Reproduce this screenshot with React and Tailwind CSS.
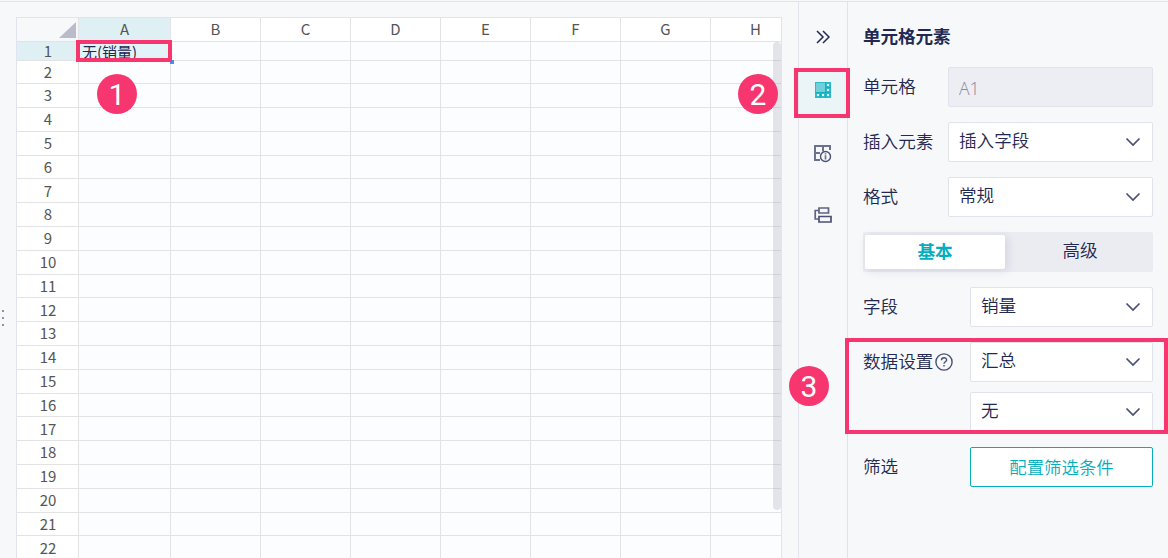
import React from "react";

const COLUMNS = ["A", "B", "C", "D", "E", "F", "G", "H"];
const ROWS = Array.from({ length: 22 }, (_, i) => i + 1);

const Chevron = () => (
  <svg width="16" height="10" viewBox="0 0 16 10" fill="none" className="shrink-0">
    <path d="M1.500 1.500 8 8l6.500-6.500" stroke="#4a4f75" strokeWidth="1.7" />
  </svg>
);

const SelectBox = ({ value, className }) => (
  <div
    className={`flex h-10 items-center justify-between rounded-[2px] border border-[#e1e3ec] bg-white pr-[11px] pl-2.5 ${className}`}
  >
    <span className="-mt-1">{value}</span>
    <Chevron />
  </div>
);

const FormRow = ({ label, children }) => (
  <div className="flex h-10 items-center justify-between">
    <span className="-mt-0.5 flex items-center whitespace-nowrap">{label}</span>
    {children}
  </div>
);

const Sheet = () => (
  <div className="relative mt-[15px] ml-4 h-[542px] w-[766px] shrink-0 overflow-hidden border-x border-t border-[#e1e4ee] bg-[#fcfdff] text-[15px] text-[#555]">
    <div className="flex h-6 border-b border-[#e3e3e5] bg-white">
      <div className="flex w-[62px] shrink-0 items-end justify-end border-r border-[#e3e3e5] bg-[#f7f8fa] pr-[2px] pb-[3px]">
        <svg width="17" height="16" viewBox="0 0 17 16">
          <path d="M17 0v16H0z" fill="#babcca" />
        </svg>
      </div>
      {COLUMNS.map((c) => (
        <div
          key={c}
          className={`flex shrink-0 items-center justify-center border-r border-[#e3e3e5] ${
            c === "A" ? "w-[92px] bg-[#def0f4]" : "w-[90px]"
          }`}
        >
          {c}
        </div>
      ))}
    </div>
    {ROWS.map((r) => (
      <div
        key={r}
        className={`flex border-b border-[#e3e3e5] ${r === 1 ? "h-[18.500px]" : "h-[23.800px]"}`}
      >
        <div
          className={`flex w-[62px] shrink-0 items-center justify-center border-r border-[#e3e3e5] pl-px ${
            r === 1 ? "bg-[#def0f4]" : "bg-white"
          }`}
        >
          {r}
        </div>
        {COLUMNS.map((c) => (
          <div
            key={c}
            className={`shrink-0 overflow-hidden border-r border-[#e3e3e5] ${c === "A" ? "w-[92px]" : "w-[90px]"} ${
              c === "A" && r === 1 ? "bg-[#e2f4f8] pl-[3px] text-[15px] leading-[20px] text-[#232850]" : ""
            }`}
          >
            {c === "A" && r === 1 ? "无(销量)" : ""}
          </div>
        ))}
      </div>
    ))}
    <div className="absolute top-[24px] right-0 h-[468px] w-2 rounded-full bg-[#9699a8]/25" />
    <div className="absolute top-[42px] left-[153px] h-1 w-1 bg-[#4d8bf0]" />
  </div>
);

const Toolbar = () => (
  <div className="ml-4 flex w-[50px] shrink-0 flex-col items-center border-x border-[#e1e3ec]">
    <div className="flex h-[68px] items-center">
      <svg width="14" height="14" viewBox="0 0 14 14" fill="none" className="mt-px">
        <path d="m1 1 6 6-6 6M7 1l6 6-6 6" stroke="#232850" strokeWidth="1.5" />
      </svg>
    </div>
    <div className="flex h-11 w-full items-center justify-center bg-[#ebf5f7]">
      <svg width="16" height="16" viewBox="0 0 16 16" className="-mt-[4px]">
        <path d="M0 0h16v16H0z" fill="#2dbbc9" />
        <path d="M1 1h9v9H1z" fill="#70cfda" />
        <path
          d="M10.500 0v10.500H16M10.500 5.500H16M0 10.500h10.500V16M5.500 10.500V16"
          stroke="#16adbe"
          fill="none"
        />
        <path d="M12 2h2v2h-2zM12 7h2v2h-2zM2 12h2v2H2zM7 12h2v2H7zM12 12h2v2h-2z" fill="#dff4f7" />
      </svg>
    </div>
    <svg width="18" height="18" viewBox="0 0 18 18" fill="none" className="mt-[31px]">
      <path
        d="M6 15H1V1h15v4M1 8h5M9 1v5.500"
        stroke="#6d7190"
        strokeWidth="2"
      />
      <circle cx="11.500" cy="11.500" r="5" stroke="#4a4f75" strokeWidth="1.4" />
      <path d="M11.500 10.300v4.200M11.500 8.200v1.300" stroke="#6d7190" strokeWidth="1.7" />
    </svg>
    <svg width="18" height="16" viewBox="0 0 18 16" fill="none" className="mt-[44px]">
      <path d="M5 1h9.500v5H5z" stroke="#5f6384" strokeWidth="1.7" />
      <path d="M5 9.500h12V15H5z" stroke="#4a4f75" strokeWidth="1.7" />
      <path d="M5 3.500H1.200V12H5" stroke="#5f6384" strokeWidth="1.7" />
    </svg>
  </div>
);

const HelpIcon = () => (
  <svg width="18" height="18" viewBox="0 0 18 18" fill="none" className="mt-px ml-0.5">
    <circle cx="9" cy="9" r="8.100" stroke="#4a4f75" strokeWidth="1.4" />
    <path
      d="M6.500 7.200c0-3.300 5.100-3.200 5.100-.2 0 1.700-2.600 1.800-2.600 3.700M9 11.900v1.700"
      stroke="#4a4f75"
      strokeWidth="1.4"
    />
  </svg>
);

const Panel = () => (
  <div className="flex grow flex-col gap-[15px] pr-[15px] pl-[15px] text-[17.600px] leading-6 font-[350] text-[#232850]">
    <h2 className="mt-[22px] -mb-px h-[29px] font-bold tracking-[-0.1px]">单元格元素</h2>
    <FormRow label="单元格">
      <div className="flex h-10 w-[205px] items-center rounded-[2px] border border-[#e1e3ec] bg-[#edeef3] pt-0.5 pl-2.5 font-['Open_Sans','Noto_Sans',sans-serif] font-[350] text-[#8488a0]">
        A1
      </div>
    </FormRow>
    <FormRow label="插入元素">
      <SelectBox value="插入字段" className="w-[205px]" />
    </FormRow>
    <FormRow label="格式">
      <SelectBox value="常规" className="w-[205px]" />
    </FormRow>
    <div className="flex h-10 rounded-[2px] bg-[#ebecf2] p-0.5 text-center leading-[32px]">
      <div className="my-px w-[140px] rounded-[2px] bg-white font-bold text-[#06aebd] shadow-[2px_2px_10px_rgba(35,40,80,0.13)]">
        基本
      </div>
      <div className="flex-1 pl-1">高级</div>
    </div>
    <FormRow label="字段">
      <SelectBox value="销量" className="w-[183px]" />
    </FormRow>
    <div className="flex flex-col gap-2.5">
      <FormRow
        label={
          <>
            数据设置
            <HelpIcon />
          </>
        }
      >
        <SelectBox value="汇总" className="w-[183px]" />
      </FormRow>
      <SelectBox value="无" className="w-[183px] self-end" />
    </div>
    <FormRow label="筛选">
      <div className="flex h-10 w-[183px] items-center justify-center rounded-[2px] border border-[#06aebd] bg-white text-[17.400px] text-[#06aebd]">
        配置筛选条件
      </div>
    </FormRow>
  </div>
);

// Numbered callout laid over the UI
const Marker = ({ n, className }) => (
  <div
    className={`absolute flex h-10 w-10 items-center justify-center rounded-full bg-[#f73670] pt-0.5 font-['Roboto',sans-serif] text-[30px] leading-none text-white ${className}`}
  >
    {n}
  </div>
);

const Frame = ({ className }) => <div className={`absolute border-4 border-[#f73670] ${className}`} />;

const App = () => (
  <div className="relative flex h-[558px] w-[1168px] overflow-hidden bg-[#f7f8fa] pt-px font-['Noto_Sans_CJK_SC',sans-serif]">
    <div className="flex w-full border-t border-[#e1e3ec]">
      <Sheet />
      <Toolbar />
      <Panel />
    </div>

    <div className="absolute top-[310px] left-[2px] flex flex-col gap-[5px]">
      <span className="h-0.5 w-0.5 bg-[#9093a8]" />
      <span className="h-0.5 w-0.5 bg-[#9093a8]" />
      <span className="h-0.5 w-0.5 bg-[#9093a8]" />
    </div>

    <Frame className="top-[40px] left-[76px] h-[22px] w-[96px]" />
    <Frame className="top-[68px] left-[794px] h-[50px] w-[56px]" />
    <Frame className="top-[338px] left-[845px] h-[96px] w-[323px]" />
    <Marker n={1} className="top-[74px] left-[97px]" />
    <Marker n={2} className="top-[74px] left-[738px]" />
    <Marker n={3} className="top-[366px] left-[789px]" />
  </div>
);

export default App;
